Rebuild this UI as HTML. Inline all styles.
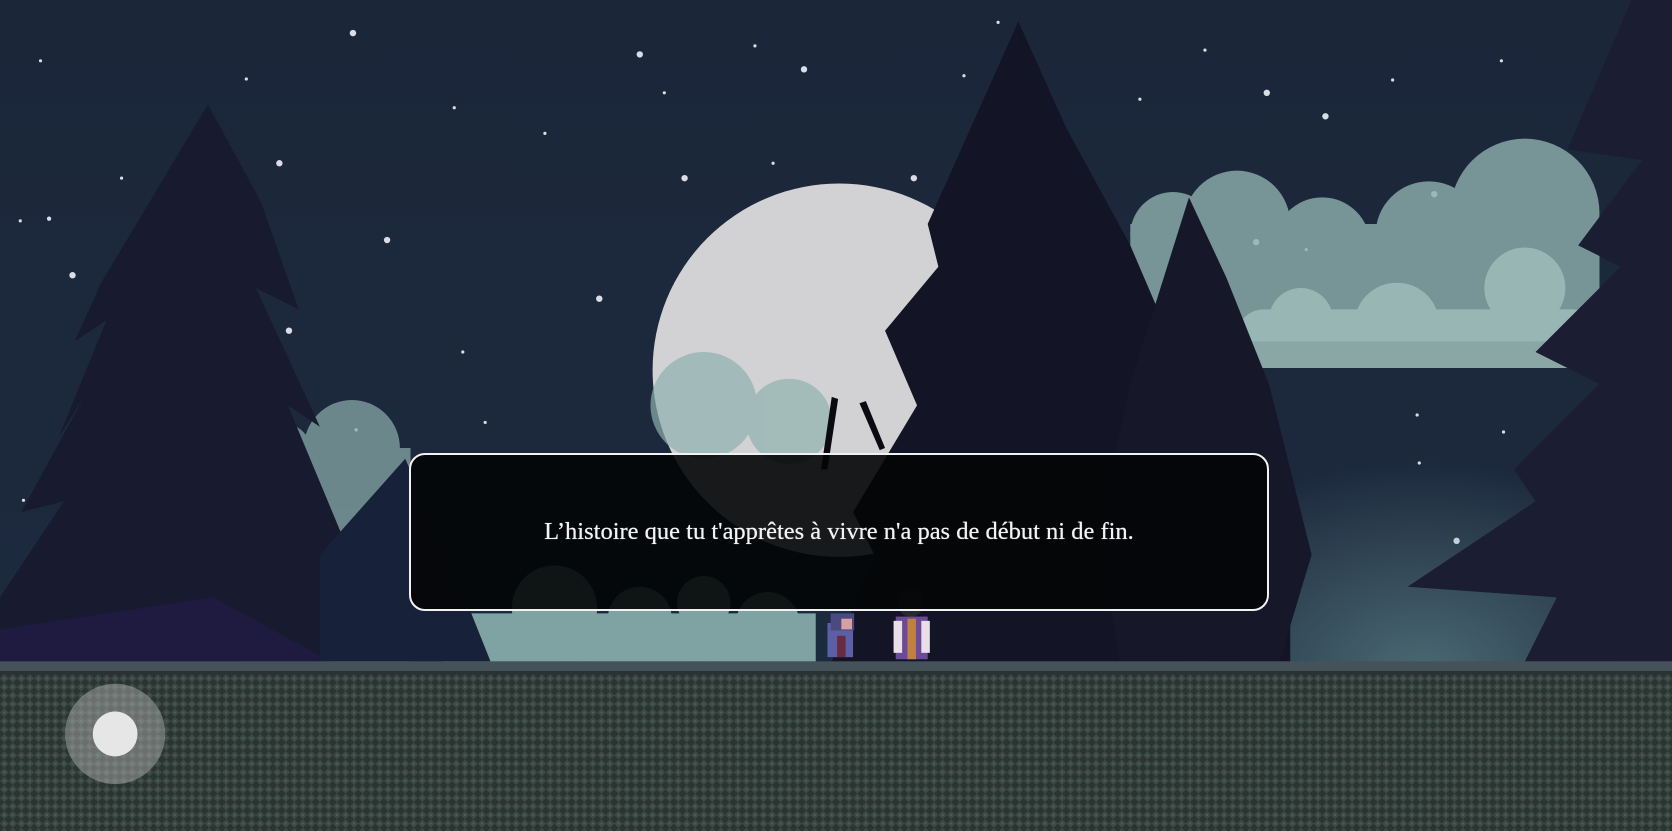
<!DOCTYPE html>
<html><head><meta charset="utf-8"><style>
html,body{margin:0;padding:0;width:1672px;height:831px;overflow:hidden;background:#1a2538}
svg{position:absolute;left:0;top:0}
.box{position:absolute;left:409px;top:453px;width:856px;height:154px;border:2.5px solid #f2f2f2;border-radius:16px;background:rgba(3,4,6,0.9);display:flex;align-items:center;justify-content:center;color:#f4f4f4;font-family:"Liberation Serif",serif;font-size:24.5px;text-shadow:0 0 0.6px #fff}
</style></head><body>
<svg width="1672" height="831" viewBox="0 0 1568 779" preserveAspectRatio="none">
<defs>
<linearGradient id="sky" x1="0" y1="0" x2="0" y2="1"><stop offset="0" stop-color="#1b2639"/><stop offset="1" stop-color="#1d2b40"/></linearGradient>
<radialGradient id="glow" cx="0.5" cy="1" r="0.6"><stop offset="0" stop-color="#6f9c9c" stop-opacity="0.55"/><stop offset="1" stop-color="#6f9c9c" stop-opacity="0"/></radialGradient>
<pattern id="gr" width="8" height="8" patternUnits="userSpaceOnUse"><rect width="8" height="8" fill="#2b3431"/><path d="M0 4 L4 0 L8 4 L4 8Z" fill="#3b4a44"/><circle cx="4" cy="4" r="1" fill="#4d5e56"/></pattern>
</defs>
<rect width="1568" height="779" fill="url(#sky)"/>
<g fill="#d8dde6">
<circle cx="331" cy="31" r="3"/><circle cx="600" cy="51" r="3"/><circle cx="754" cy="65" r="3"/><circle cx="38" cy="57" r="1.5"/><circle cx="231" cy="74" r="1.5"/><circle cx="426" cy="101" r="1.5"/><circle cx="511" cy="125" r="1.5"/><circle cx="623" cy="87" r="1.5"/><circle cx="708" cy="43" r="1.5"/><circle cx="904" cy="71" r="1.5"/><circle cx="936" cy="21" r="1.5"/><circle cx="1069" cy="93" r="1.5"/><circle cx="1130" cy="47" r="1.5"/><circle cx="1188" cy="87" r="3"/><circle cx="1243" cy="109" r="3"/><circle cx="1306" cy="75" r="1.5"/><circle cx="1408" cy="57" r="1.5"/><circle cx="262" cy="153" r="3"/><circle cx="114" cy="167" r="1.5"/><circle cx="642" cy="167" r="3"/><circle cx="725" cy="153" r="1.5"/><circle cx="857" cy="167" r="3"/><circle cx="19" cy="207" r="1.5"/><circle cx="46" cy="205" r="2"/><circle cx="363" cy="225" r="3"/><circle cx="68" cy="258" r="3"/><circle cx="562" cy="280" r="3"/><circle cx="271" cy="310" r="3"/><circle cx="434" cy="330" r="1.5"/><circle cx="455" cy="396" r="1.5"/><circle cx="1178" cy="227" r="3"/><circle cx="1345" cy="182" r="3"/><circle cx="1225" cy="234" r="1.5"/><circle cx="1329" cy="389" r="1.5"/><circle cx="1410" cy="405" r="1.5"/><circle cx="1331" cy="434" r="1.5"/><circle cx="1366" cy="507" r="3"/><circle cx="22" cy="469" r="1.5"/><circle cx="334" cy="403" r="1.5"/>
</g>
<circle cx="787" cy="347" r="175" fill="#d2d2d4"/>
<rect x="1100" y="300" width="468" height="330" fill="url(#glow)"/>
<g fill="#8eb0ae" opacity="0.8">
<circle cx="1430" cy="200" r="70"/><circle cx="1340" cy="220" r="50"/><circle cx="1160" cy="210" r="50"/><circle cx="1100" cy="220" r="40"/><circle cx="1240" cy="230" r="45"/><rect x="1060" y="210" width="440" height="110"/>
</g>
<g fill="#9ebdb8" opacity="0.85"><circle cx="1310" cy="305" r="40"/><circle cx="1430" cy="270" r="38"/><circle cx="1220" cy="300" r="30"/><rect x="1160" y="290" width="340" height="55" rx="25"/></g>
<g fill="#8fb0ae" opacity="0.7"><circle cx="330" cy="420" r="45"/><circle cx="260" cy="430" r="35"/><rect x="225" y="420" width="160" height="200"/><circle cx="660" cy="380" r="50"/><circle cx="740" cy="395" r="40"/></g>
<g fill="#7fa3a2"><circle cx="520" cy="570" r="40"/><circle cx="600" cy="580" r="30"/><circle cx="660" cy="565" r="25"/><circle cx="720" cy="585" r="30"/><rect x="415" y="575" width="350" height="47"/></g>
<path d="M195 98 L245 190 L280 290 L240 270 L300 400 L270 380 L320 500 L300 620 L0 620 L0 560 L60 470 L20 480 L80 370 L55 410 L100 300 L70 320 L120 210 L95 265 Z" fill="#181a30"/>
<path d="M0 590 L200 560 L310 620 L0 620Z" fill="#1f1a40"/>
<path d="M300 520 L380 430 L420 520 L460 620 L300 620Z" fill="#17213a"/>
<path d="M955 20 L1000 120 L1060 230 L1090 300 L1150 420 L1210 560 L1210 620 L780 620 L820 520 L800 480 L860 380 L830 310 L880 250 L870 210 Z" fill="#131526"/>
<path d="M1115 185 L1150 260 L1190 360 L1230 520 L1200 620 L1050 620 L1030 500 L1060 360 Z" fill="#161829"/>
<path d="M1568 0 L1568 620 L1430 620 L1460 560 L1320 550 L1440 470 L1420 440 L1500 360 L1440 330 L1520 250 L1480 230 L1540 150 L1470 140 L1530 0 Z" fill="#1b1d33"/>
<path d="M780 372 L786 374 L776 440 L770 440Z M806 378 L812 376 L830 420 L825 422Z" fill="#0a0a10"/>
<rect x="0" y="620" width="1568" height="159" fill="url(#gr)"/>
<rect x="0" y="620" width="1568" height="9" fill="#46525a"/>
<rect x="0" y="629" width="1568" height="3" fill="#2a3235"/>
<circle cx="108" cy="688" r="47" fill="#b8b8b8" opacity="0.45"/>
<circle cx="108" cy="688" r="21" fill="#e6e6e6"/>
<g>
<rect x="776" y="584" width="24" height="32" fill="#5b5fa8"/><rect x="779" y="575" width="22" height="16" fill="#4a4a80"/><rect x="789" y="580" width="10" height="10" fill="#d8a0a0"/><rect x="785" y="596" width="8" height="20" fill="#6a2a40"/>
<rect x="840" y="578" width="30" height="40" fill="#6b4a9a"/><rect x="838" y="582" width="8" height="30" fill="#e8dfe8"/><rect x="864" y="582" width="8" height="30" fill="#e8dfe8"/><rect x="851" y="580" width="8" height="38" fill="#c08040"/><rect x="843" y="552" width="22" height="26" rx="10" fill="#333" opacity="0.7"/>
</g>
</svg>
<div class="box">L’histoire que tu t'apprêtes à vivre n'a pas de début ni de fin.</div>
</body></html>
